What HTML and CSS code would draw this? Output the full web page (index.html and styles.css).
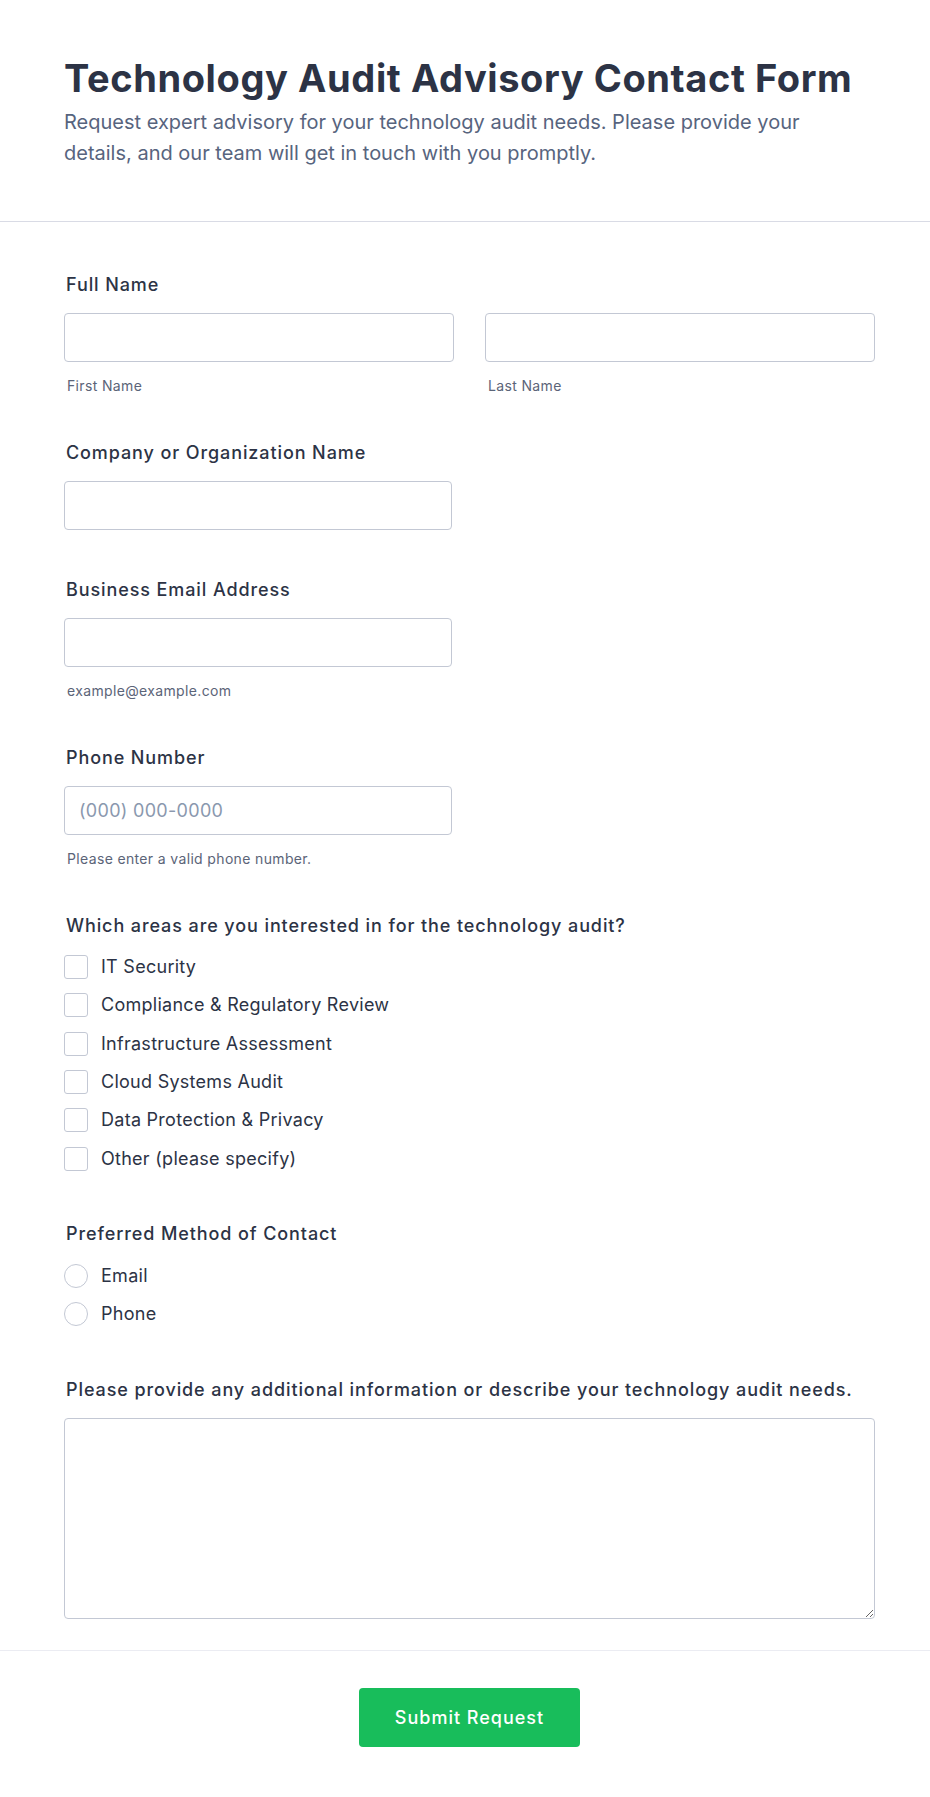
FILE: index.html
```html
<!DOCTYPE html>
<html lang="en">
<head>
<meta charset="utf-8">
<title>Technology Audit Advisory Contact Form</title>
<link rel="stylesheet" href="styles.css">
</head>
<body>
<div class="page">
  <header class="header">
    <h1 class="title">Technology Audit Advisory Contact Form</h1>
    <p class="subtitle">Request expert advisory for your technology audit needs. Please provide your details, and our team will get in touch with you promptly.</p>
  </header>

  <form class="form">
    <div class="field">
      <label class="label">Full Name</label>
      <div class="name-row">
        <div class="name-col">
          <input class="input" type="text">
          <span class="sublabel">First Name</span>
        </div>
        <div class="name-col">
          <input class="input" type="text">
          <span class="sublabel">Last Name</span>
        </div>
      </div>
    </div>

    <div class="field field-plain">
      <label class="label">Company or Organization Name</label>
      <input class="input input-half" type="text">
    </div>

    <div class="field">
      <label class="label">Business Email Address</label>
      <input class="input input-half" type="email">
      <span class="sublabel">example@example.com</span>
    </div>

    <div class="field">
      <label class="label">Phone Number</label>
      <input class="input input-half" type="tel" placeholder="(000) 000-0000">
      <span class="sublabel">Please enter a valid phone number.</span>
    </div>

    <div class="field">
      <label class="label">Which areas are you interested in for the technology audit?</label>
      <div class="options">
        <label class="option"><input class="check" type="checkbox"><span>IT Security</span></label>
        <label class="option"><input class="check" type="checkbox"><span>Compliance &amp; Regulatory Review</span></label>
        <label class="option"><input class="check" type="checkbox"><span>Infrastructure Assessment</span></label>
        <label class="option"><input class="check" type="checkbox"><span>Cloud Systems Audit</span></label>
        <label class="option"><input class="check" type="checkbox"><span>Data Protection &amp; Privacy</span></label>
        <label class="option"><input class="check" type="checkbox"><span>Other (please specify)</span></label>
      </div>
    </div>

    <div class="field">
      <label class="label">Preferred Method of Contact</label>
      <div class="options">
        <label class="option"><input class="radio" type="radio" name="contact"><span>Email</span></label>
        <label class="option"><input class="radio" type="radio" name="contact"><span>Phone</span></label>
      </div>
    </div>

    <div class="field field-last">
      <label class="label">Please provide any additional information or describe your technology audit needs.</label>
      <textarea class="textarea"></textarea>
    </div>
  </form>

  <footer class="footer">
    <button class="submit" type="button">Submit Request</button>
  </footer>
</div>
</body>
</html>
```
FILE: styles.css
```css
* { box-sizing: border-box; }

body {
  margin: 0;
  background: #ffffff;
  font-family: Inter, "Noto Sans", "Liberation Sans", sans-serif;
  color: #2c3345;
}

.header {
  padding: 56px 55px 52px 64px;
  border-bottom: 1px solid #d9dbe5;
}

.title {
  margin: 0 0 5px;
  font-size: 38px;
  line-height: 1.2;
  font-weight: 700;
  letter-spacing: 0.6px;
  color: #2c3345;
}

.subtitle {
  margin: 0;
  max-width: 780px;
  font-size: 20px;
  line-height: 31px;
  color: #57647e;
}

.form {
  display: flex;
  flex-direction: column;
  gap: 44px;
  padding: 50px 55px 31px 64px;
}

.field {
  display: flex;
  flex-direction: column;
}

.field-plain { padding-bottom: 3px; }

.label {
  display: block;
  margin: 0 0 16px 2px;
  font-size: 18px;
  line-height: 25px;
  font-weight: 500;
  letter-spacing: 0.9px;
  color: #2c3345;
}

.name-row {
  display: flex;
  gap: 31px;
}

.name-col {
  flex: 1;
  display: flex;
  flex-direction: column;
}

.input {
  display: block;
  width: 100%;
  height: 49px;
  margin: 0;
  padding: 0 14px;
  border: 1px solid #c3c8d4;
  border-radius: 4px;
  background: #ffffff;
  font-family: inherit;
  font-size: 18px;
  letter-spacing: 0.3px;
  color: #2c3345;
  outline: none;
}

.input-half { width: 388px; }

.input::placeholder { color: #8a98ae; }

.sublabel {
  display: block;
  margin: 13px 0 0 3px;
  font-size: 14px;
  line-height: 21px;
  letter-spacing: 0.35px;
  color: #5b6478;
}

.options {
  display: flex;
  flex-direction: column;
  gap: 14.3px;
  margin-top: 1.6px;
  padding-bottom: 6.5px;
}

.option {
  display: flex;
  align-items: center;
  gap: 13px;
  height: 24px;
  font-size: 18px;
  line-height: 24px;
  letter-spacing: 0.27px;
  color: #2c3345;
}

.check,
.radio {
  appearance: none;
  -webkit-appearance: none;
  flex: none;
  width: 24px;
  height: 24px;
  margin: 0;
  border: 1px solid #c3c8d4;
  background: #ffffff;
}

.check { border-radius: 3px; }
.radio { border-radius: 50%; }

.textarea {
  display: block;
  width: 100%;
  height: 201px;
  margin: 0;
  padding: 12px 14px;
  border: 1px solid #c3c8d4;
  border-radius: 4px;
  font-family: inherit;
  font-size: 18px;
  color: #2c3345;
  resize: vertical;
  outline: none;
}

.footer {
  display: flex;
  justify-content: center;
  padding: 37px 55px 50px 64px;
  border-top: 1px solid #ebecf2;
}

.submit {
  height: 59px;
  padding: 0 36px;
  border: none;
  border-radius: 4px;
  background: #18bd5b;
  color: #ffffff;
  font-family: inherit;
  font-size: 18px;
  font-weight: 500;
  letter-spacing: 1px;
  cursor: pointer;
}
```
